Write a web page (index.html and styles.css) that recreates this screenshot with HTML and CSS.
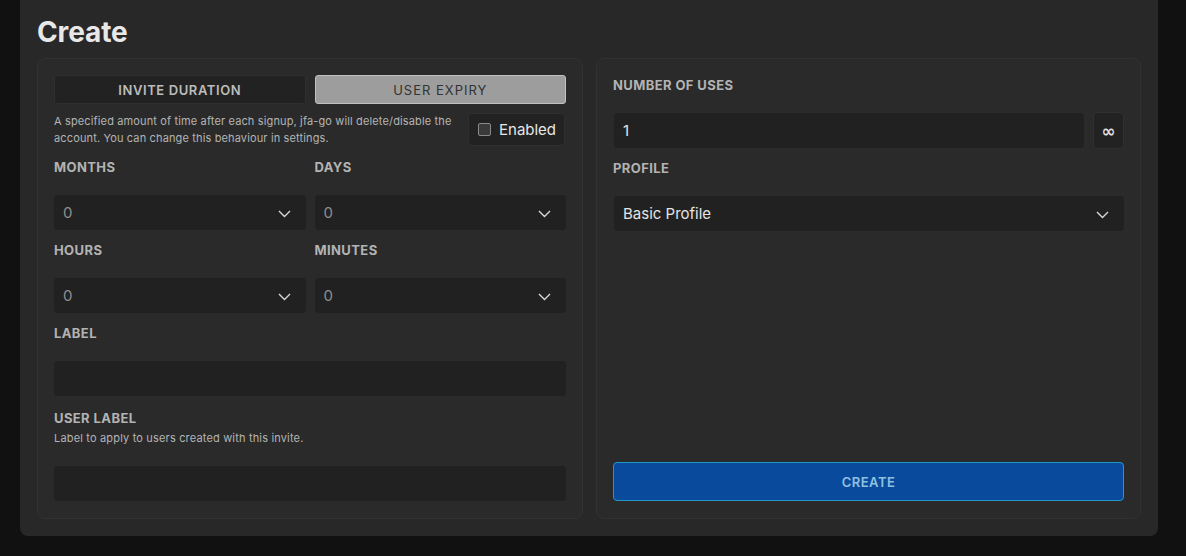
FILE: index.html
```html
<!DOCTYPE html>
<html>
<head>
<meta charset="utf-8">
<link rel="stylesheet" href="styles.css">
</head>
<body>
<div class="page">
  <section class="card">
    <h1 class="title">Create</h1>
    <div class="panels">
      <div class="panel">
        <div class="tabs">
          <button class="tab">INVITE DURATION</button>
          <button class="tab tab-active">USER EXPIRY</button>
        </div>
        <div class="expiry-row">
          <p class="desc">A specified amount of time after each signup, jfa-go will delete/disable the account. You can change this behaviour in settings.</p>
          <label class="enabled"><span class="checkbox"></span><span>Enabled</span></label>
        </div>
        <div class="grid2">
          <div class="field">
            <div class="label">MONTHS</div>
            <div class="select"><span class="muted">0</span><svg class="chev" width="13" height="8" viewBox="0 0 13 8"><polyline points="1,1 6.5,6.5 12,1" fill="none" stroke="#d8d8d8" stroke-width="1.4"/></svg></div>
          </div>
          <div class="field">
            <div class="label">DAYS</div>
            <div class="select"><span class="muted">0</span><svg class="chev" width="13" height="8" viewBox="0 0 13 8"><polyline points="1,1 6.5,6.5 12,1" fill="none" stroke="#d8d8d8" stroke-width="1.4"/></svg></div>
          </div>
          <div class="field">
            <div class="label">HOURS</div>
            <div class="select"><span class="muted">0</span><svg class="chev" width="13" height="8" viewBox="0 0 13 8"><polyline points="1,1 6.5,6.5 12,1" fill="none" stroke="#d8d8d8" stroke-width="1.4"/></svg></div>
          </div>
          <div class="field">
            <div class="label">MINUTES</div>
            <div class="select"><span class="muted">0</span><svg class="chev" width="13" height="8" viewBox="0 0 13 8"><polyline points="1,1 6.5,6.5 12,1" fill="none" stroke="#d8d8d8" stroke-width="1.4"/></svg></div>
          </div>
        </div>
        <div class="field field-gap">
          <div class="label">LABEL</div>
          <div class="input"></div>
        </div>
        <div class="field field-gap2">
          <div class="label">USER LABEL</div>
          <div class="subdesc">Label to apply to users created with this invite.</div>
          <div class="input"></div>
        </div>
      </div>
      <div class="panel panel-right">
        <div class="field">
          <div class="label">NUMBER OF USES</div>
          <div class="uses-row">
            <div class="input input-uses"><span class="value">1</span></div>
            <button class="inf">∞</button>
          </div>
        </div>
        <div class="field field-gap">
          <div class="label">PROFILE</div>
          <div class="select select-wide"><span class="value">Basic Profile</span><svg class="chev" width="13" height="8" viewBox="0 0 13 8"><polyline points="1,1 6.5,6.5 12,1" fill="none" stroke="#d8d8d8" stroke-width="1.4"/></svg></div>
        </div>
        <button class="create">CREATE</button>
      </div>
    </div>
  </section>
</div>
</body>
</html>
```
FILE: styles.css
```css
* { box-sizing: border-box; }
html, body { margin: 0; padding: 0; }
body {
  background: #111111;
  font-family: "Inter", "Noto Sans", sans-serif;
  color: #e0e0e0;
  width: 1186px;
  height: 556px;
  overflow: hidden;
}
.page {
  padding: 0 28px 0 20px;
}
.card {
  margin-top: -10px;
  background: #282828;
  border-radius: 8px;
  padding: 24px 17px 17px 17px;
}
.title {
  margin: 0;
  font-size: 28px;
  line-height: 36px;
  font-weight: 700;
  color: #e8e8e8;
  letter-spacing: -0.1px;
}
.panels {
  margin-top: 8px;
  display: grid;
  grid-template-columns: 546px 545px;
  column-gap: 13px;
  align-items: stretch;
}
.panel {
  background: #2a2a2a;
  border: 1px solid #323232;
  border-radius: 8px;
  padding: 16px 16px 17px 16px;
  display: flex;
  flex-direction: column;
}
.tabs {
  display: flex;
  gap: 9px;
}
.tab {
  flex: 1;
  height: 29px;
  border-radius: 3px;
  font-family: inherit;
  font-size: 13px;
  padding: 0;
  cursor: pointer;
}
.tab:not(.tab-active) {
  background: #222222;
  border: 1px solid #2f2f2f;
  color: #bcbcbc;
  font-weight: 600;
  letter-spacing: 0.6px;
}
.tab-active {
  background: #9d9d9d;
  border: 1px solid #c0c0c0;
  color: #333333;
  font-weight: 400;
  letter-spacing: 1px;
}
.expiry-row {
  margin-top: 9px;
  display: flex;
  justify-content: space-between;
  align-items: flex-start;
}
.desc {
  margin: 0;
  width: 410px;
  font-size: 11px;
  line-height: 17px;
  color: #b4b4b4;
  letter-spacing: 0.14px;
}
.enabled {
  display: flex;
  align-items: center;
  gap: 8px;
  width: 97px;
  height: 33px;
  margin-right: 1px;
  padding-left: 9px;
  background: #222222;
  border: 1px solid #2f2f2f;
  border-radius: 4px;
  font-size: 15px;
  color: #e6e6e6;
}
.checkbox {
  width: 13px;
  height: 13px;
  border: 1px solid #8a8a8a;
  border-radius: 2px;
  background: #3a3a3a;
}
.grid2 {
  margin-top: 10px;
  display: grid;
  grid-template-columns: 1fr 1fr;
  column-gap: 9px;
  row-gap: 10px;
}
.field {
  display: flex;
  flex-direction: column;
}
.label {
  font-size: 13px;
  line-height: 20px;
  font-weight: 700;
  color: #b3b3b3;
  margin-bottom: 18px;
  letter-spacing: 0.4px;
}
.select, .input {
  height: 35px;
  background: #212121;
  border-radius: 4px;
  display: flex;
  align-items: center;
  justify-content: space-between;
  padding: 0 15px 0 9px;
  font-size: 15px;
}
.muted { color: #8e8e8e; }
.value { color: #e4e4e4; }
.chev { display: block; margin-top: 2px; }
.field-gap { margin-top: 10px; }
.field-gap2 { margin-top: 12px; }
.field-gap2 .label { margin-bottom: 2px; }
.subdesc {
  font-size: 11px;
  line-height: 16px;
  color: #b4b4b4;
  margin-bottom: 20px;
  letter-spacing: 0.17px;
}
.uses-row {
  display: flex;
  align-items: center;
  gap: 9px;
  height: 35px;
  padding-left: 1px;
}
.input-uses {
  flex: 1;
}
.inf {
  width: 31px;
  height: 37px;
  margin: -1px 0;
  background: #222222;
  border: 1px solid #303030;
  border-radius: 4px;
  color: #e0e0e0;
  font-family: "DejaVu Sans", sans-serif;
  font-size: 17px;
  font-weight: 700;
  padding: 0;
}
.select-wide { margin-left: 1px; }
.create {
  margin-top: auto;
  height: 39px;
  background: #0a4a9d;
  border: 1px solid #2298c8;
  border-radius: 4px;
  color: #8fc1df;
  font-family: inherit;
  font-size: 13px;
  font-weight: 600;
  letter-spacing: 0.5px;
}
```
